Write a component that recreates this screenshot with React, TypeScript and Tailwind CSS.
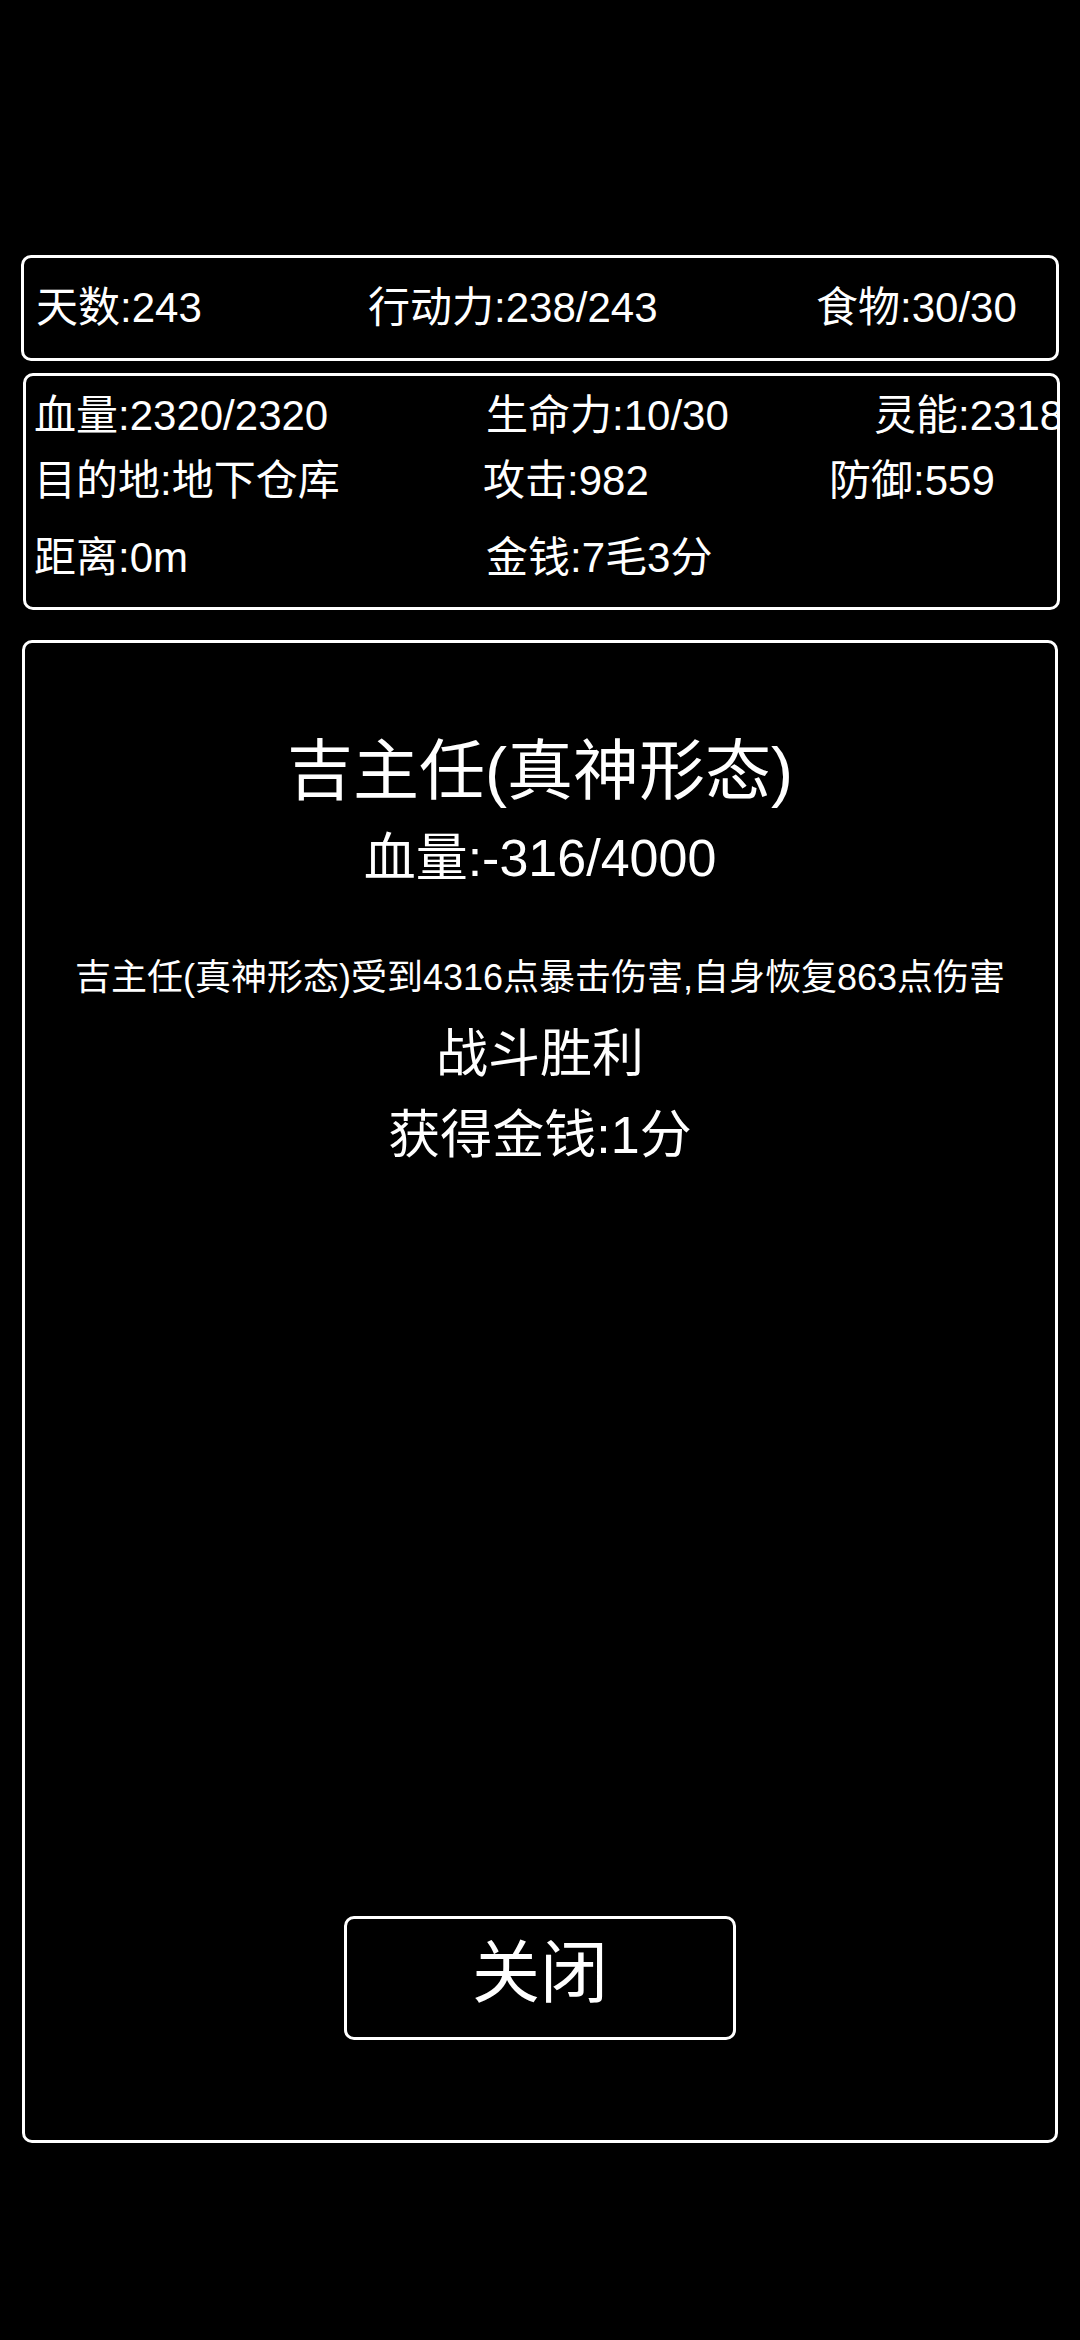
const font = { fontFamily: '"Liberation Sans", "Noto Sans CJK SC", sans-serif' };

function TopStats() {
  return (
    <div className="mx-[21px] h-[106px] border-[3px] border-white rounded-[10px] flex items-center pl-[12px] text-[42px] leading-none text-white">
      <div className="w-[332px] shrink-0">天数:243</div>
      <div className="w-[448px] shrink-0">行动力:238/243</div>
      <div className="shrink-0">食物:30/30</div>
    </div>
  );
}

function PlayerStats() {
  return (
    <div className="mt-[12px] ml-[23px] w-[1037px] h-[237px] border-[3px] border-white rounded-[10px] overflow-hidden pl-[8px] text-[42px] text-white whitespace-nowrap">
      <div className="h-[76px] flex items-center pt-[2px]">
        <div className="w-[452px] shrink-0">血量:2320/2320</div>
        <div className="w-[388px] shrink-0">生命力:10/30</div>
        <div className="shrink-0">灵能:2318</div>
      </div>
      <div className="h-[56px] flex items-center">
        <div className="w-[449px] shrink-0">目的地:地下仓库</div>
        <div className="w-[346px] shrink-0">攻击:982</div>
        <div className="shrink-0">防御:559</div>
      </div>
      <div className="h-[99px] flex items-center">
        <div className="w-[452px] shrink-0">距离:0m</div>
        <div className="shrink-0">金钱:7毛3分</div>
      </div>
    </div>
  );
}

function BattlePanel() {
  return (
    <div className="mt-[30px] mx-[22px] h-[1503px] border-[3px] border-white rounded-[10px] flex flex-col text-white">
      <div className="h-[1105px] flex flex-col items-center pt-[88px] text-center">
        <div className="text-[66px] leading-[80px]">吉主任(真神形态)</div>
        <div className="mt-[12px] text-[52px] leading-[70px]">血量:-316/4000</div>
        <div className="mt-[60px] text-[36px] leading-[50px] whitespace-nowrap">
          吉主任(真神形态)受到4316点暴击伤害,自身恢复863点伤害
        </div>
        <div className="mt-[16px] text-[52px] leading-[70px]">战斗胜利</div>
        <div className="mt-[11px] text-[52px] leading-[70px]">获得金钱:1分</div>
      </div>
      <div className="flex-1 flex justify-center pt-[168px]">
        <button className="w-[392px] h-[124px] border-[3px] border-white rounded-[10px] flex items-center justify-center pb-[10px] text-[68px] leading-none text-white">
          关闭
        </button>
      </div>
    </div>
  );
}

export default function App() {
  return (
    <div className="min-h-[2340px] w-[1080px] bg-black pt-[255px]" style={font}>
      <TopStats />
      <PlayerStats />
      <BattlePanel />
    </div>
  );
}
